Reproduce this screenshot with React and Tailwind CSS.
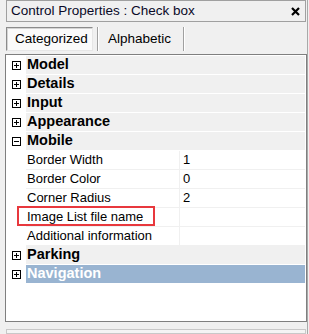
import React from 'react';

const categories = [
  { name: 'Model' },
  { name: 'Details' },
  { name: 'Input' },
  { name: 'Appearance' },
  {
    name: 'Mobile',
    open: true,
    props: [
      ['Border Width', '1'],
      ['Border Color', '0'],
      ['Corner Radius', '2'],
      ['Image List file name', ''],
      ['Additional information', ''],
    ],
  },
  { name: 'Parking' },
  { name: 'Navigation', selected: true },
];

const Expander = ({ open }) => (
  <svg width="9" height="9" viewBox="0 0 9 9" className="block">
    <rect x="0.5" y="0.5" width="8" height="8" fill="white" stroke="black" />
    <line x1="2" y1="4.5" x2="7" y2="4.5" stroke="black" />
    {!open && <line x1="4.5" y1="2" x2="4.5" y2="7" stroke="black" />}
  </svg>
);

const App = () => {
  return (
    <div
      className="w-[309px] h-[334px] bg-[#f0f0f0] relative overflow-hidden text-black"
      style={{ fontFamily: '"Liberation Sans", Arial, sans-serif' }}
    >
      <div className="w-[308px] h-full border-r border-[#a9a9a9] flex flex-col">
        {/* Title */}
        <div className="ml-[6px] w-[300px] h-[22px] border border-[#a0a0a0] flex items-center justify-between pl-[4px] pr-[5px]">
          <span className="text-[13.5px] leading-none text-[#0a0a28]">Control Properties : Check box</span>
          <svg width="9" height="9" viewBox="0 0 9 9">
            <path d="M1 1 L8 8 M8 1 L1 8" stroke="black" strokeWidth="2.2" />
          </svg>
        </div>

        {/* Tabs */}
        <div className="mt-[5px] ml-[6px] h-[24px] flex items-stretch text-[13.5px]">
          <div className="w-[87px] border-t border-l border-[#8c8c8c] border-r border-b border-r-[#e6e6e6] border-b-[#e6e6e6] bg-[#fafafa] shadow-[inset_1px_1px_0_#d4d4d4] flex items-center pl-[8px]">
            Categorized
          </div>
          <div className="ml-[4px] w-[2px] border-l border-[#a0a0a0] bg-white" />
          <div className="w-[84px] flex items-center pl-[9px]">Alphabetic</div>
          <div className="w-[2px] border-l border-[#a0a0a0] bg-white" />
        </div>

        {/* Property grid */}
        <div className="mt-[3px] ml-[5px] w-[302px] h-[268px] border border-[#7f7f7f] bg-white pt-[1px]">
          {categories.map((c) => (
            <React.Fragment key={c.name}>
              <div className="flex h-[19px]">
                <div className="w-[20px] flex items-center justify-center pl-[1px]">
                  <Expander open={c.open} />
                </div>
                <div
                  className={`flex-1 mr-[1px] border-b border-white flex items-center pl-[1px] text-[14.5px] font-bold ${
                    c.selected ? 'bg-[#99b4d1] text-white' : 'bg-[#f0f0f0] text-black'
                  }`}
                >
                  {c.name}
                </div>
              </div>
              {c.open &&
                c.props.map(([name, value]) => (
                  <div key={name} className="flex h-[19px] text-[13px]">
                    <div className="w-[20px]" />
                    <div className="w-[154px] border-b border-r border-[#f0f0f0] flex items-center pl-[1px]">
                      {name}
                    </div>
                    <div className="flex-1 mr-[1px] border-b border-[#f0f0f0] flex items-center pl-[3px]">
                      {value}
                    </div>
                  </div>
                ))}
            </React.Fragment>
          ))}
        </div>

        {/* Description pane */}
        <div className="mt-[7px] ml-[6px] w-[300px] flex-1 border border-[#c8c8c8] bg-[#f4f4f4]" />
      </div>

      {/* Annotation highlight */}
      <div className="absolute left-[17px] top-[206px] w-[138px] h-[20px] border-2 border-[#e8383d]" />
    </div>
  );
};

export default App;
